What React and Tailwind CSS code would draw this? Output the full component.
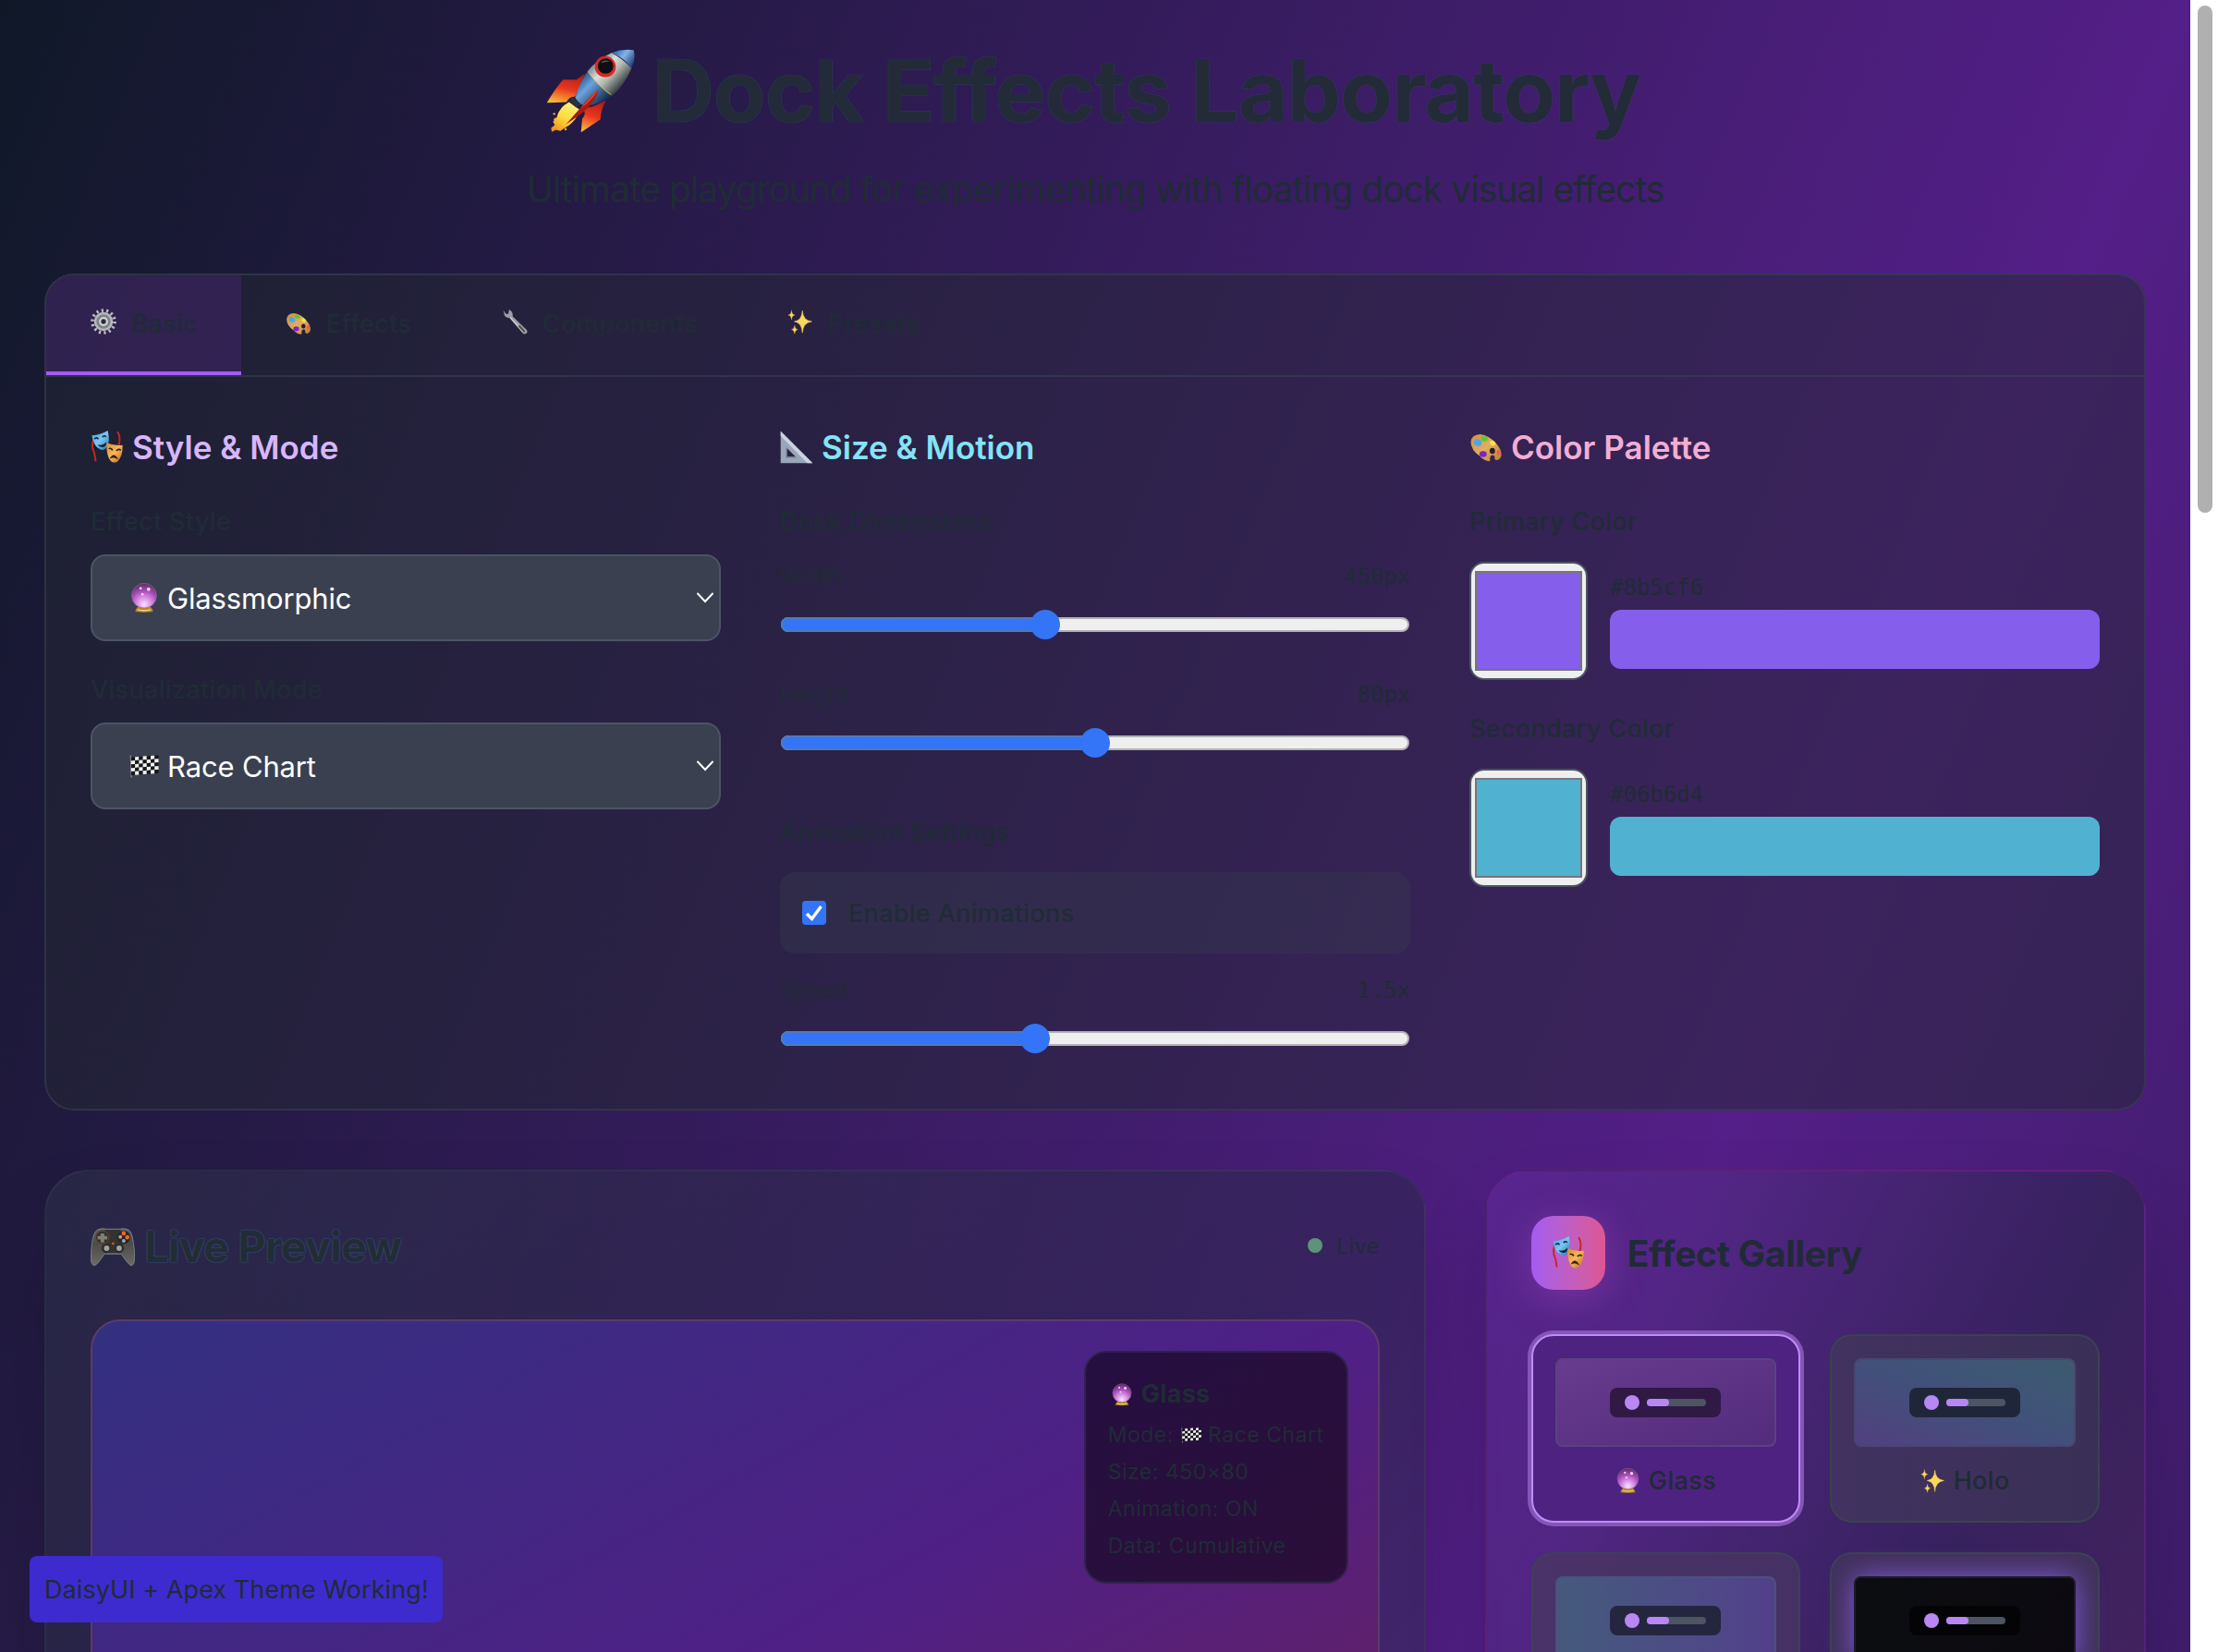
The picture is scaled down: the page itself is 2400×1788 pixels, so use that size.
function Rocket() {
  return (
    <svg viewBox="38 36 294 272" className="h-[91px] w-[98px] shrink-0">
      <defs>
        <linearGradient id="rkBody" gradientUnits="userSpaceOnUse" x1="200" y1="70" x2="285" y2="150">
          <stop offset="0" stopColor="#77818a" />
          <stop offset="0.35" stopColor="#d9dcda" />
          <stop offset="0.6" stopColor="#b4b8b2" />
          <stop offset="1" stopColor="#3c4648" />
        </linearGradient>
        <linearGradient id="rkBlue" gradientUnits="userSpaceOnUse" x1="150" y1="130" x2="225" y2="205">
          <stop offset="0" stopColor="#2b5a96" />
          <stop offset="0.35" stopColor="#6da3dc" />
          <stop offset="1" stopColor="#143056" />
        </linearGradient>
        <linearGradient id="rkNose" gradientUnits="userSpaceOnUse" x1="270" y1="40" x2="325" y2="80">
          <stop offset="0" stopColor="#3f78bd" />
          <stop offset="0.4" stopColor="#86b4e6" />
          <stop offset="1" stopColor="#1c3f78" />
        </linearGradient>
        <linearGradient id="rkFin" x1="0.6" y1="0" x2="0.3" y2="1">
          <stop offset="0" stopColor="#b81e12" />
          <stop offset="0.5" stopColor="#e8361f" />
          <stop offset="1" stopColor="#f9b53a" />
        </linearGradient>
        <linearGradient id="rkFlame" x1="0.7" y1="0" x2="0.1" y2="1">
          <stop offset="0" stopColor="#fdf27a" />
          <stop offset="0.5" stopColor="#fcdc3c" />
          <stop offset="1" stopColor="#f08a1c" />
        </linearGradient>
      </defs>
      <path d="M112 208 Q80 225 72 258 L60 272 L66 282 L54 292 L56 305 L70 298 L84 302 L98 292 L112 284 Q135 265 150 235 Z" fill="url(#rkFlame)" />
      <circle cx="64" cy="246" r="3.5" fill="#f5a52c" />
      <circle cx="101" cy="296" r="4" fill="#f5a52c" />
      <circle cx="68" cy="264" r="5" fill="#f7b733" />
      <path d="M164 116 L136 135 L93 135 Q70 160 40 210 L104 208 Q112 190 132 190 Z" fill="url(#rkFin)" />
      <path d="M232 203 L190 222 L158 230 Q170 246 155 262 L151 306 L214 264 Q216 230 232 203 Z" fill="url(#rkFin)" />
      <path d="M122 190 L112 206 L136 226 L152 216 Z" fill="#26323c" />
      <path d="M172 108 Q146 145 132 194 Q146 216 166 222 Q215 214 252 188 Z" fill="url(#rkBlue)" />
      <path d="M250 48 Q200 72 172 108 Q205 155 252 188 Q295 150 315 98 Q285 65 250 48 Z" fill="url(#rkBody)" />
      <path d="M250 48 Q285 34 322 39 Q330 66 315 98 Q290 62 250 48 Z" fill="url(#rkNose)" />
      <path d="M176 112 Q208 156 248 184" fill="none" stroke="#e0c04c" strokeWidth="3" />
      <circle cx="230" cy="93" r="34" fill="#d32a22" />
      <circle cx="231" cy="91" r="25" fill="#0d0f14" />
      <path d="M215 82 Q225 68 245 76 Q230 76 215 82 Z" fill="#56616d" />
      <path d="M208 168 Q198 172 165 208 Q140 238 102 280 Q150 250 178 222 Q202 194 208 168 Z" fill="#a51c14" />
      <path d="M208 168 Q190 180 150 228 Q185 205 208 168 Z" fill="#ee3a2a" />
    </svg>
  );
}

function Masks({ className }) {
  return (
    <svg viewBox="85 82 110 110" className={className}>
      <defs>
        <linearGradient id="mkBlue" x1="0" y1="0" x2="1" y2="1">
          <stop offset="0" stopColor="#3f9ddb" />
          <stop offset="0.5" stopColor="#7cc6f2" />
          <stop offset="1" stopColor="#1f6fb4" />
        </linearGradient>
        <linearGradient id="mkGold" x1="0" y1="0" x2="1" y2="1">
          <stop offset="0" stopColor="#d98a2c" />
          <stop offset="0.5" stopColor="#f6b95c" />
          <stop offset="1" stopColor="#b4661a" />
        </linearGradient>
      </defs>
      <path d="M96 108 Q86 135 97 155 Q100 170 102 184" fill="none" stroke="#c5281f" strokeWidth="6" />
      <path d="M174 86 Q186 104 178 132" fill="none" stroke="#c5281f" strokeWidth="6" />
      <path d="M89 98 Q120 96 142 82 Q152 122 136 140 Q128 150 116 144 Q96 136 89 98 Z" fill="url(#mkBlue)" />
      <path d="M98 110 Q105 102 111 110 M124 104 Q130 96 136 103" fill="none" stroke="#12233b" strokeWidth="5" />
      <path d="M108 128 Q124 134 138 120 Q136 138 122 137 Q112 136 108 128 Z" fill="#12233b" />
      <path d="M138 122 Q162 134 191 130 Q192 168 174 184 Q163 192 152 183 Q136 166 138 122 Z" fill="url(#mkGold)" />
      <path d="M145 142 Q152 138 158 147 M170 149 Q178 141 185 147" fill="none" stroke="#3a1d0c" strokeWidth="5" />
      <path d="M149 174 Q162 152 175 176 Q162 166 149 174 Z" fill="#3a1d0c" stroke="#3a1d0c" strokeWidth="2" />
    </svg>
  );
}

function Gamepad() {
  return (
    <svg viewBox="23 31 146 126" className="mt-[3px] h-[42px] w-12 shrink-0">
      <defs>
        <linearGradient id="gpBody" x1="0" y1="0" x2="0" y2="1">
          <stop offset="0" stopColor="#5f5e59" />
          <stop offset="0.4" stopColor="#4c4b48" />
          <stop offset="1" stopColor="#6b6a64" />
        </linearGradient>
      </defs>
      <path d="M46 36 Q60 30 76 34 L116 34 Q134 30 148 36 Q160 44 164 80 Q170 110 167 140 Q164 156 154 153 Q146 148 124 116 L68 116 Q48 148 38 153 Q28 156 25 140 Q22 110 28 80 Q32 44 46 36 Z" fill="url(#gpBody)" stroke="#7c8f92" strokeWidth="2.5" />
      <path d="M70 36 L122 36 Q126 70 134 100 Q126 116 114 112 L78 112 Q66 116 58 100 Q66 70 70 36 Z" fill="#33332f" />
      <circle cx="62" cy="61" r="22" fill="#33322f" stroke="#6b4630" strokeWidth="3" />
      <path d="M56 48 h12 v9 h10 v11 h-10 v10 h-12 v-10 h-10 v-11 h10 Z" fill="#7f7f7a" />
      <circle cx="132" cy="61" r="22" fill="#282826" />
      <circle cx="132" cy="48" r="7" fill="#f0672a" />
      <circle cx="144" cy="61" r="7" fill="#f0672a" />
      <circle cx="121" cy="60" r="6" fill="#a3a5a4" />
      <circle cx="132" cy="73" r="6" fill="#a3a5a4" />
      <circle cx="97" cy="82" r="4.5" fill="#a9582b" />
      <circle cx="76" cy="97" r="13" fill="#262624" />
      <circle cx="76" cy="97" r="9" fill="#a2a3a2" />
      <circle cx="117" cy="97" r="13" fill="#262624" />
      <circle cx="117" cy="97" r="9" fill="#a2a3a2" />
    </svg>
  );
}

function Gear({ className }) {
  return (
    <svg viewBox="0 0 100 100" className={className}>
      <circle cx="50" cy="50" r="43" fill="none" stroke="#b9bcc0" strokeWidth="13" strokeDasharray="8 11.3" />
      <circle cx="50" cy="50" r="32" fill="#7e8186" stroke="#b6b9bd" strokeWidth="9" />
      <circle cx="50" cy="50" r="14" fill="#5b5e63" stroke="#d5d7d9" strokeWidth="7" />
      <circle cx="50" cy="50" r="7" fill="#23232f" />
    </svg>
  );
}

function Palette({ className }) {
  return (
    <svg viewBox="0 0 100 100" className={className}>
      <defs>
        <linearGradient id="plWood" x1="0" y1="0" x2="1" y2="1">
          <stop offset="0" stopColor="#c98f45" />
          <stop offset="0.5" stopColor="#e2ae62" />
          <stop offset="1" stopColor="#b97c34" />
        </linearGradient>
      </defs>
      <path d="M4 34 Q6 12 32 11 Q58 14 80 38 Q98 58 96 76 Q92 90 80 89 Q74 86 76 78 Q72 70 64 76 Q60 84 62 92 Q48 94 32 78 Q4 58 4 34 Z" fill="url(#plWood)" />
      <ellipse cx="69" cy="61" rx="8" ry="9" fill="#2a1c30" />
      <ellipse cx="25" cy="36" rx="12" ry="10" fill="#49a8e8" transform="rotate(30 25 36)" />
      <ellipse cx="45" cy="24" rx="10" ry="8" fill="#5cc832" />
      <ellipse cx="70" cy="38" rx="9" ry="7" fill="#f7e04a" transform="rotate(35 70 38)" />
      <ellipse cx="88" cy="66" rx="6" ry="8" fill="#e9604f" />
      <ellipse cx="41" cy="71" rx="11" ry="9" fill="#7b26c0" />
    </svg>
  );
}

function Wrench({ className }) {
  return (
    <svg viewBox="0 0 100 100" className={className}>
      <path d="M6 6 L10 26 Q16 38 30 36 L82 96 Q92 102 98 92 Q100 86 94 80 L42 30 Q44 12 28 4 L26 18 Q22 24 15 20 Z" fill="#9b9ea6" />
      <path d="M32 34 L84 92" stroke="#d8dae0" strokeWidth="4" />
      <path d="M66 66 L88 90" stroke="#5c4a52" strokeWidth="8" />
    </svg>
  );
}

function Sparkles({ className }) {
  return (
    <svg viewBox="0 0 100 100" className={className} fill="#fbd75a">
      <path d="M58 8 Q60 46 94 50 Q60 54 58 94 Q56 54 27 50 Q56 46 58 8 Z" stroke="#fbd75a" strokeWidth="2" />
      <path d="M16 6 Q17 23 29 25 Q17 27 16 44 Q15 27 3 25 Q15 23 16 6 Z" stroke="#fbd75a" strokeWidth="1" />
      <path d="M28 64 Q29 79 40 81 Q29 83 28 98 Q27 83 16 81 Q27 79 28 64 Z" stroke="#fbd75a" strokeWidth="1" />
    </svg>
  );
}

function Ruler({ className }) {
  return (
    <svg viewBox="0 0 100 100" className={className}>
      <path fillRule="evenodd" d="M2 2 L98 98 L2 98 Z M20 52 L20 80 L48 80 Z" fill="#9aa6b9" />
      <path d="M2 2 L98 98 L82 98 L2 16 Z" fill="#c9d3e2" />
      <path d="M20 52 L20 80 L48 80" fill="none" stroke="#717c92" strokeWidth="4" />
    </svg>
  );
}

function Crystal({ className }) {
  return (
    <svg viewBox="0 0 100 100" className={className}>
      <defs>
        <radialGradient id="cbGlass" cx="0.5" cy="0.85" r="0.85">
          <stop offset="0" stopColor="#f8e2fd" />
          <stop offset="0.35" stopColor="#d68ce4" />
          <stop offset="0.65" stopColor="#a94cb8" />
          <stop offset="1" stopColor="#5c2a60" />
        </radialGradient>
      </defs>
      <circle cx="50" cy="43" r="42" fill="url(#cbGlass)" stroke="#8a6a9c" strokeWidth="2" />
      <path d="M20 97 Q22 84 32 80 Q50 88 68 80 Q78 84 80 97 Q50 101 20 97 Z" fill="#b9852a" />
      <path d="M28 90 Q50 96 72 90" fill="none" stroke="#f6d872" strokeWidth="4" />
      <circle cx="38" cy="18" r="4" fill="#fff" opacity="0.9" />
      <circle cx="65" cy="21" r="6" fill="#fbe6ff" opacity="0.9" />
      <circle cx="44" cy="38" r="4" fill="#fff" opacity="0.8" />
    </svg>
  );
}

const flagCells = [0, 1, 2, 3, 4].flatMap((r) => [0, 1, 2, 3, 4, 5, 6].map((c) => ({ r, c })));

function Flag({ className }) {
  return (
    <svg viewBox="0 0 100 100" preserveAspectRatio="none" className={className}>
      <path d="M4 6 L7 98" stroke="#8b8b8f" strokeWidth="4" />
      <g transform="skewY(-5)">
        {flagCells.map(({ r, c }) => (
          <rect key={`${r}-${c}`} x={6 + c * 13.2} y={14 + r * 15} width="13.2" height="15" fill={(r + c) % 2 ? "#f1f1ee" : "#17171a"} />
        ))}
      </g>
    </svg>
  );
}

function Tab({ icon, label, width, active }) {
  return (
    <div
      className={`flex h-[108px] items-center gap-4 border-b-4 pl-12 ${width} ${
        active ? "border-[#a55bf5] bg-[#9333ea]/16" : "border-transparent"
      }`}
    >
      {icon}
      <span className="pt-px text-[27px] leading-10 font-medium tracking-[0.014em]">{label}</span>
    </div>
  );
}

function Heading({ icon, color, children }) {
  return (
    <h3 className={`flex h-14 items-center gap-[9px] text-[35px] leading-[56px] font-semibold ${color}`}>
      {icon}
      <span>{children}</span>
    </h3>
  );
}

function Label({ children, className = "" }) {
  return <div className={`h-10 pt-px text-[27px] leading-10 font-medium tracking-[0.012em] ${className}`}>{children}</div>;
}

function Select({ icon, children }) {
  return (
    <div className="mt-4 flex h-[94px] items-center rounded-2xl border-2 border-[#4b5464] bg-[#3a4050] pr-[5px] pl-10 text-white">
      {icon}
      <span className="ml-[9px] flex-1 pt-[2px] text-[31px] leading-[46px] tracking-[-0.005em]">{children}</span>
      <svg viewBox="0 0 20 12" className="h-3 w-5" fill="none" stroke="white" strokeWidth="2" strokeLinecap="round">
        <path d="M2 1.5 L10 10 L18 1.5" />
      </svg>
    </div>
  );
}

function Slider({ label, value, fraction, className = "" }) {
  return (
    <div className={className}>
      <div className="flex justify-between text-[23px] leading-8 tracking-[0.025em]">
        <span>{label}</span>
        <span className="font-['DejaVu_Sans_Mono',monospace] text-[24px] tracking-[-0.004em]">{value}</span>
      </div>
      <div className="relative mt-5 flex h-8 items-center">
        <div className="mx-px h-4 w-full rounded-full border-2 border-[#b2b2b2] bg-[#efefef]" />
        <div
          className="absolute top-2 left-px h-4 rounded-l-full border-2 border-r-0 border-[#5079bd] bg-[#3375f6]"
          style={{ width: `calc((100% - 32px) * ${fraction} + 16px)` }}
        />
        <div
          className="absolute top-0 size-8 rounded-full bg-[#3375f6]"
          style={{ left: `calc((100% - 32px) * ${fraction})` }}
        />
      </div>
    </div>
  );
}

function ColorField({ label, hex, fill, className }) {
  return (
    <div className={className}>
      <Label>{label}</Label>
      <div className="mt-6 flex items-center gap-6">
        <div className="flex h-32 w-32 items-center justify-center rounded-2xl border-2 border-[#4b5563] bg-[#efefef]">
          <div className={`h-[108px] w-[116px] border-2 border-[#767676] ${fill}`} />
        </div>
        <div className="flex-1">
          <div className="font-['DejaVu_Sans_Mono',monospace] text-[24px] leading-8">{hex}</div>
          <div className={`mt-2 h-16 rounded-xl ${fill}`} />
        </div>
      </div>
    </div>
  );
}

function MiniDock({ className }) {
  return (
    <div className={`flex h-8 w-[120px] items-center gap-2 rounded-lg px-4 ${className}`}>
      <div className="size-4 rounded-full bg-[#b887f4]" />
      <div className="h-2 w-16 rounded-full bg-[#4d5462]">
        <div className="h-2 w-6 rounded-full bg-[#b887f4]" />
      </div>
    </div>
  );
}

function EffectCard({ frame, thumb, dock, icon, label }) {
  return (
    <div className={`h-[204px] rounded-[24px] border-2 p-6 ${frame}`}>
      <div className={`flex h-24 items-center justify-center rounded-lg border-2 ${thumb}`}>
        <MiniDock className={dock} />
      </div>
      {label && (
        <div className="mt-4 flex items-center justify-center gap-[9px] text-[27px] leading-10 font-medium tracking-[0.014em]">
          {icon}
          <span className="pt-px">{label}</span>
        </div>
      )}
    </div>
  );
}

export default function App() {
  return (
    <div className="relative flex h-[1788px] w-[2400px] overflow-hidden bg-white font-['Inter',sans-serif] text-[#202b36]">
      <div className="h-[1788px] w-[2370px] overflow-hidden">
        <div className="h-[5800px] bg-linear-to-br/srgb from-[#101828] via-[#541f88] to-[#101828] px-12 pt-[50px]">
          <header>
            <h1 className="flex h-24 items-center justify-center">
              <Rocket />
              <span className="ml-[17px] pr-1 text-[93px] leading-[96px] font-bold tracking-[-0.0122em] text-[#222b37] [text-shadow:0_0_1px_#3a5478]">
                Dock Effects Laboratory
              </span>
            </h1>
            <p className="mt-[31px] text-center text-[39px] leading-[56px] tracking-[-0.0259em]">
              Ultimate playground for experimenting with floating dock visual effects
            </p>
          </header>

          <section className="mt-[63px] h-[906px] overflow-hidden rounded-[32px] border-2 border-[#374151]/60 bg-[#232734]/50">
            <div className="flex h-[110px] border-b-2 border-[#374151]/60">
              <Tab active width="w-[211px]" icon={<Gear className="-mt-1 size-7" />} label="Basic" />
              <Tab width="w-[234px]" icon={<Palette className="size-7" />} label="Effects" />
              <Tab width="w-[309px]" icon={<Wrench className="-mt-1 size-7" />} label="Components" />
              <Tab width="w-[240px]" icon={<Sparkles className="-mt-1 size-7" />} label="Presets" />
            </div>
            <div className="grid grid-cols-3 gap-16 px-12 pt-12">
              <div>
                <Heading color="text-[#d7b6fb]" icon={<Masks className="size-9" />}>Style &amp; Mode</Heading>
                <Label className="mt-8">Effect Style</Label>
                <Select icon={<Crystal className="size-8" />}>Glassmorphic</Select>
                <Label className="mt-8">Visualization Mode</Label>
                <Select icon={<Flag className="h-[26px] w-8" />}>Race Chart</Select>
              </div>
              <div>
                <Heading color="text-[#85e3f5]" icon={<Ruler className="size-9" />}>Size &amp; Motion</Heading>
                <Label className="mt-8">Dock Dimensions</Label>
                <Slider className="mt-6" label="Width" value="450px" fraction={0.4167} />
                <Slider className="mt-11" label="Height" value="80px" fraction={0.5} />
                <Label className="mt-[60px]">Animation Settings</Label>
                <div className="mt-6 flex h-[88px] items-center rounded-2xl bg-[#374151]/30 pl-6">
                  <div className="flex size-[26px] items-center justify-center rounded bg-[#3375f6]">
                    <svg viewBox="0 0 20 20" className="size-5" fill="none" stroke="white" strokeWidth="3.4">
                      <path d="M2 11 L7.5 16.5 L17.5 3" />
                    </svg>
                  </div>
                  <Label className="ml-6">Enable Animations</Label>
                </div>
                <Slider className="mt-6" label="Speed" value="1.5x" fraction={0.4} />
              </div>
              <div>
                <Heading color="text-[#f1aed3]" icon={<Palette className="size-9" />}>Color Palette</Heading>
                <ColorField className="mt-8" label="Primary Color" hex="#8b5cf6" fill="bg-[#855eec]" />
                <ColorField className="mt-8" label="Secondary Color" hex="#06b6d4" fill="bg-[#51b1d1]" />
              </div>
            </div>
          </section>

          <div className="mt-16 grid grid-cols-3 gap-16">
            <section className="col-span-2 h-[1400px] rounded-[48px] border-2 border-[#374151]/35 bg-linear-to-br from-[#374151]/35 via-[#1e2939]/40 to-[#374151]/30 p-12 shadow-[0_50px_100px_-24px_rgba(0,0,0,0.25)]">
              <div className="flex h-16 items-center justify-between">
                <h2 className="flex items-center text-[46.5px] leading-[64px] font-bold tracking-[-0.0156em] text-[#222c35] [text-shadow:0_0_2px_#3f6a96]">
                  <Gamepad />
                  <span className="ml-[10.5px] pt-px">Live Preview</span>
                </h2>
                <div className="flex items-center gap-[15px] text-[23px] leading-8 tracking-[0.021em]">
                  <div className="size-4 rounded-full bg-[#5f9379]" />
                  <span className="pt-px">Live</span>
                </div>
              </div>
              <div className="relative mt-12 h-[768px] rounded-[32px] border-2 border-[#5b3b6b] bg-linear-to-br/srgb from-[#333080] via-[#4f2086] to-[#6e1f52]">
                <div className="absolute top-8 right-8 h-[252px] w-[286px] rounded-[24px] border-2 border-[#30224a] bg-linear-to-br from-[#250f41] to-[#2b0e39] p-6 pt-[25px] text-[23px] leading-8 tracking-[0.022em]">
                  <div className="flex h-10 items-center gap-[9px] text-[27px] font-bold tracking-[0.01em]">
                    <Crystal className="ml-[3px] h-[27px] w-6" />
                    <span>Glass</span>
                  </div>
                  <div className="mt-2 flex items-center whitespace-nowrap">
                    <span>Mode:</span>
                    <Flag className="ml-2 h-[18px] w-6" />
                    <span className="ml-[7px]">Race Chart</span>
                  </div>
                  <div className="mt-2">Size: 450×80</div>
                  <div className="mt-2">Animation: ON</div>
                  <div className="mt-2">Data: Cumulative</div>
                </div>
              </div>
            </section>

            <section className="h-[1400px] rounded-[48px] border-2 border-[#7a1f8a]/25 bg-linear-to-br from-[#8b3fd6]/20 via-[#1e2939]/40 to-[#c81e6a]/20 p-12 shadow-[0_50px_100px_-24px_rgba(0,0,0,0.25)]">
              <div className="flex h-20 items-center">
                <div className="flex size-20 items-center justify-center rounded-[24px] bg-linear-to-r from-[#a35cf0] to-[#dd5692] shadow-[0_8px_40px_rgba(190,80,210,0.35)]">
                  <Masks className="size-9" />
                </div>
                <h2 className="ml-6 pt-px text-[39px] leading-[56px] font-bold tracking-[-0.0068em]">Effect Gallery</h2>
              </div>
              <div className="mt-12 grid grid-cols-2 gap-8">
                <EffectCard
                  frame="border-[#be8cfb] bg-[#4e2280] ring-4 ring-[#8556b6]"
                  thumb="border-[#5a4282] bg-linear-to-br from-[#683b8f] to-[#532c7c]"
                  dock="bg-[#301945]"
                  icon={<Crystal className="size-[27px]" />}
                  label="Glass"
                />
                <EffectCard
                  frame="border-[#3b4250] bg-linear-to-r from-[#41325f] to-[#3a3057]"
                  thumb="border-[#49466f] bg-linear-to-tr from-[#51407f] via-[#41507a] to-[#3d5b70]"
                  dock="bg-[#20263a]"
                  icon={<Sparkles className="size-[27px]" />}
                  label="Holo"
                />
                <EffectCard
                  frame="border-[#3e4155] bg-linear-to-r from-[#493368] to-[#453163]"
                  thumb="border-[#4b5180] bg-linear-to-r from-[#445a7d] to-[#52408a]"
                  dock="bg-[#24263f]"
                />
                <EffectCard
                  frame="border-[#3b4250] bg-[#40315a]"
                  thumb="border-[#1c1d28] bg-linear-to-r from-[#0b0d11] to-[#0c0a10] shadow-[0_0_30px_#7f58dc]"
                  dock="bg-[#040406]"
                />
              </div>
            </section>
          </div>
        </div>
      </div>
      <div className="w-[30px] bg-white pt-[6px] pl-2">
        <div className="h-[549px] w-4 rounded-full bg-[#b0b0b0]" />
      </div>
      <div className="absolute bottom-8 left-8 h-[72px] w-[447px] rounded-lg bg-[#3d2bcf] px-4 pt-[17px] text-[27px] leading-10 tracking-[0.003em] whitespace-nowrap">
        DaisyUI + Apex Theme Working!
      </div>
    </div>
  );
}
